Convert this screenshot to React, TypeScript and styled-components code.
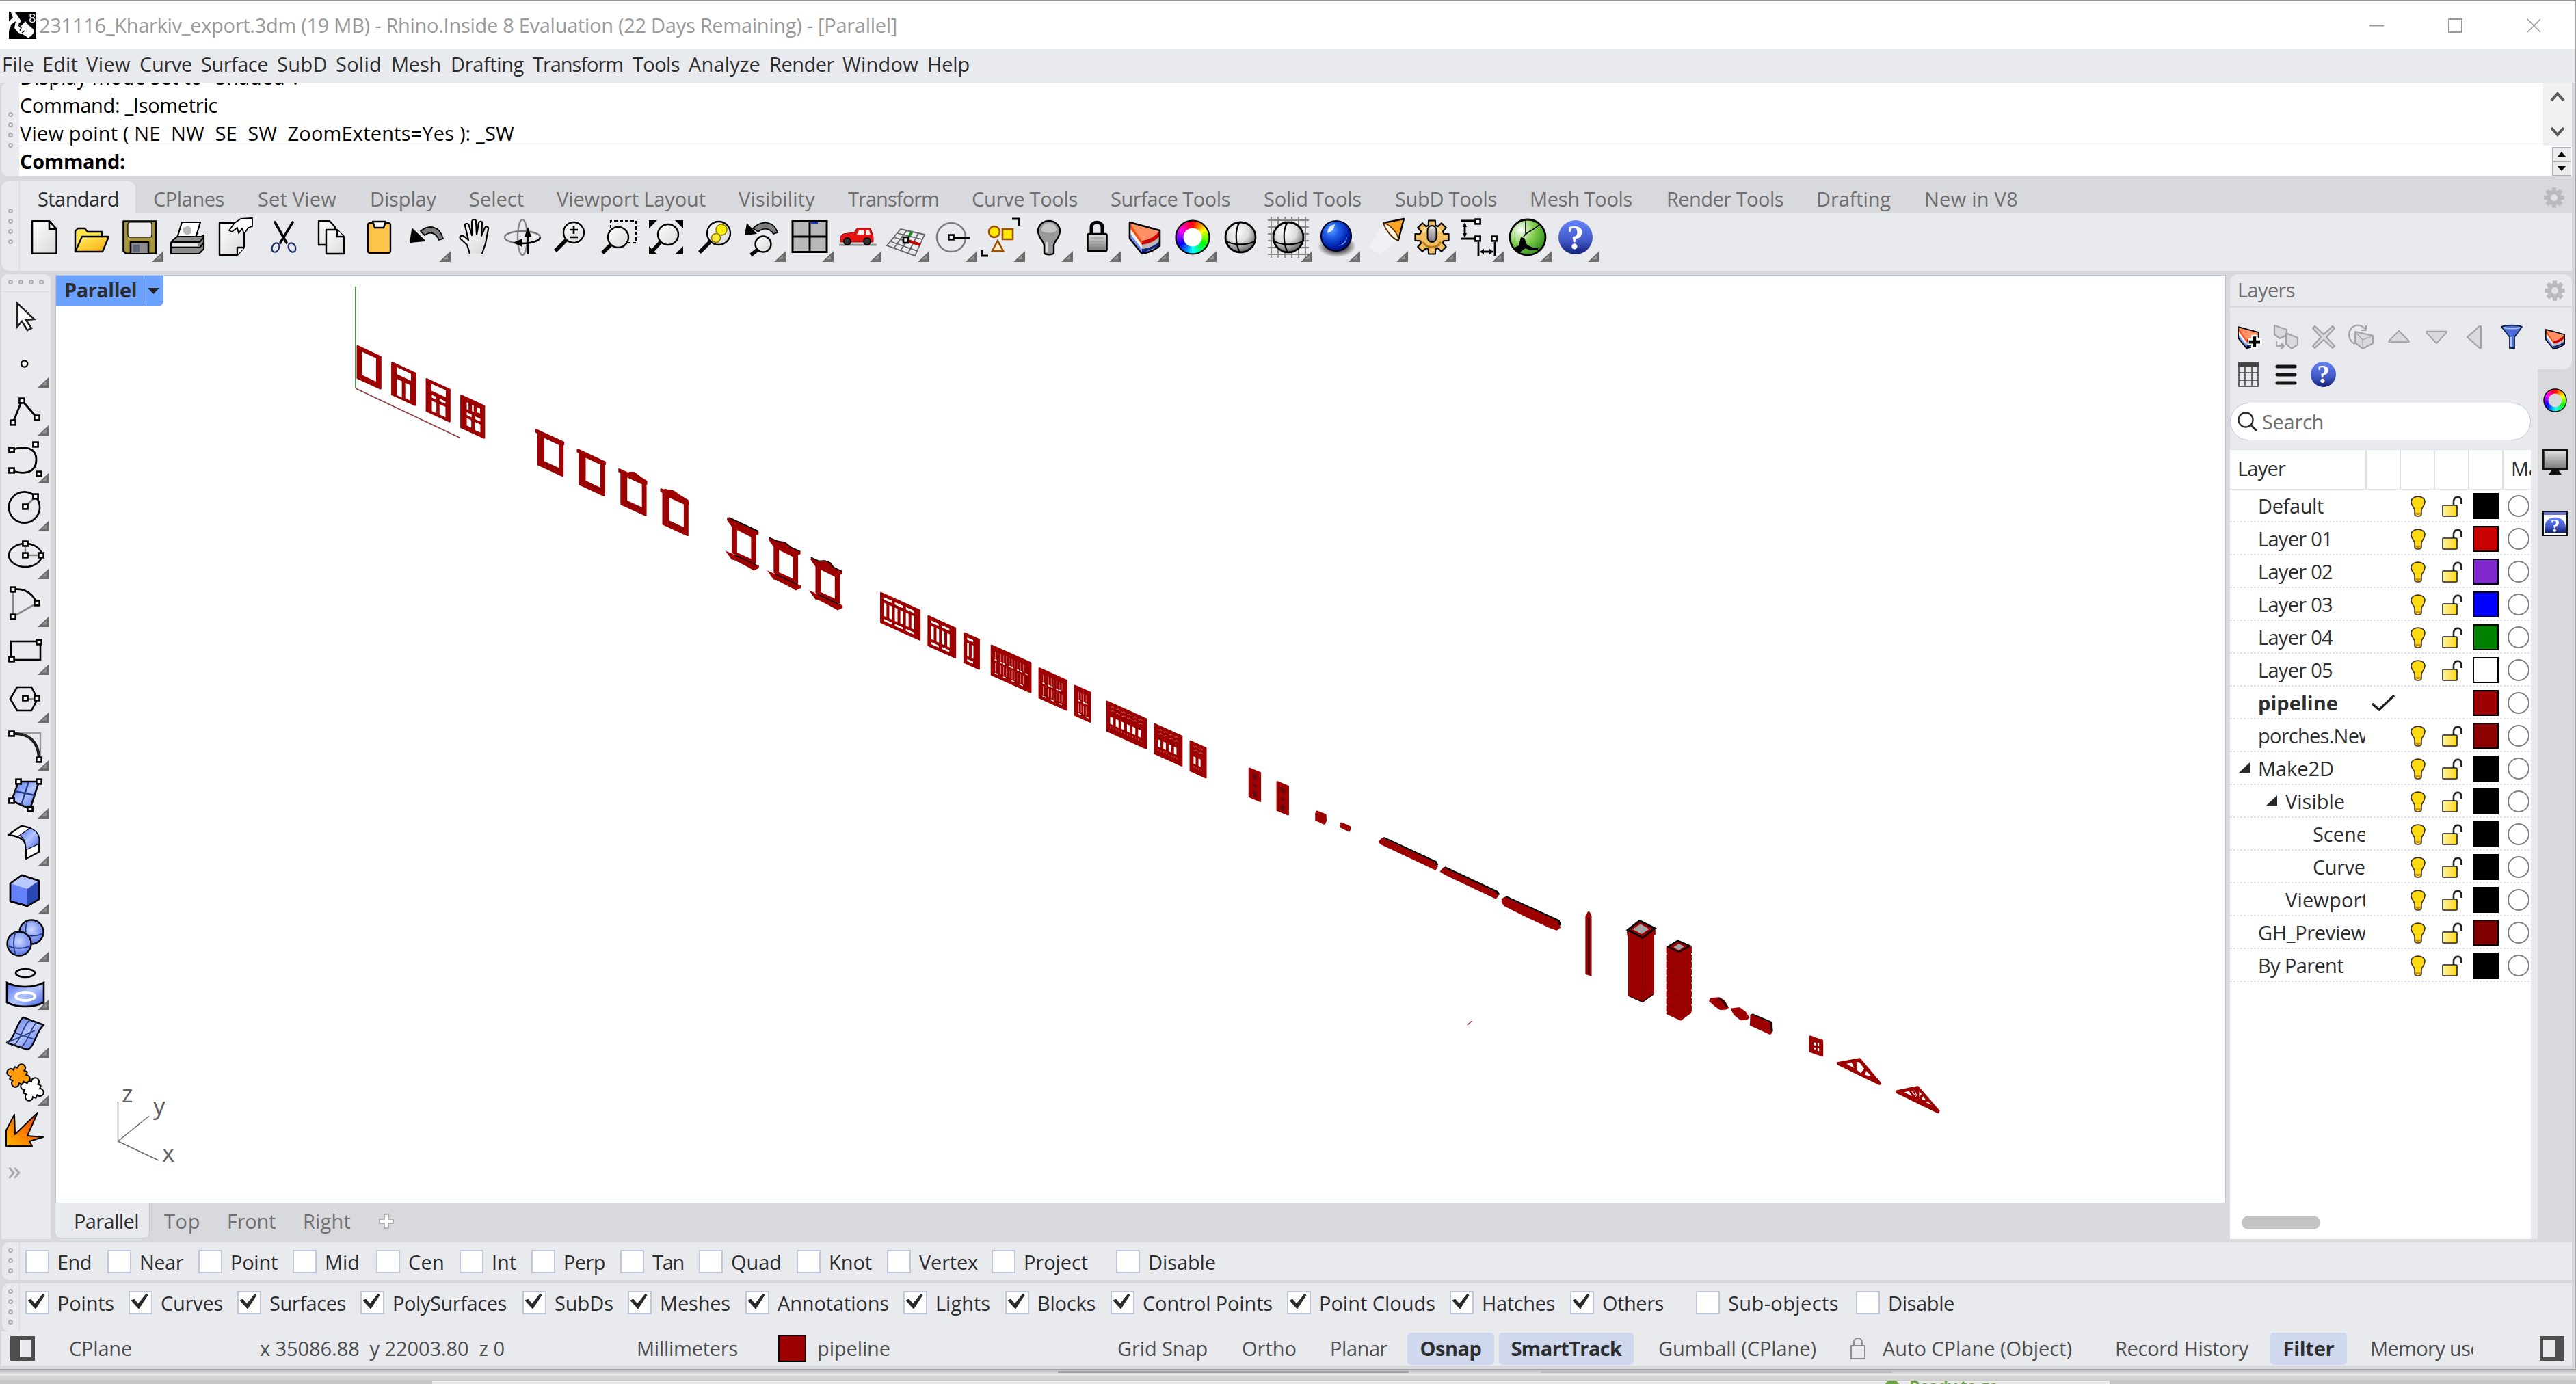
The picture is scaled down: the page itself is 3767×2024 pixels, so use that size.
import React, { useLayoutEffect, useRef, useState } from 'react';
import styled, { createGlobalStyle, css } from 'styled-components';

const C = {
  frame: '#d8d9dd',
  panel: '#e9eaee',
  edge: '#bfc7db',
  line: '#dfe3ea',
  text: '#2d2e2f',
  muted: '#6f6f70',
  status: '#4c4e4e',
  active: '#cfd8ed',
  red: '#9d0000',
};

const Global = createGlobalStyle`
  html, body { margin: 0; padding: 0; background: ${C.frame}; overflow: hidden; }
  body { font-family: "Open Sans", "Noto Sans", sans-serif; font-size: 29px; line-height: 36px; color: ${C.text}; }
  * { box-sizing: border-box; }
  svg { display: block; overflow: visible; flex: none; }
`;

/* ---------- text that tracks itself to a given width ---------- */
const TextSpan = styled.span`
  white-space: pre;
  flex: none;
`;
function Label({ children, w }: { children: string; w?: number }) {
  const ref = useRef<HTMLSpanElement>(null);
  const [ls, setLs] = useState(0);
  useLayoutEffect(() => {
    if (!ref.current || !w) return;
    const natural = ref.current.getBoundingClientRect().width;
    setLs((w - natural) / children.length);
  }, [children, w]);
  return (
    <TextSpan ref={ref} style={{ letterSpacing: ls }}>
      {children}
    </TextSpan>
  );
}

/* ---------- shared defs ---------- */
const Defs = () => (
  <svg width="0" height="0">
    <defs>
      <linearGradient id="paper" x1="0" y1="0" x2="1" y2="1">
        <stop offset="0" stopColor="#fff" />
        <stop offset="1" stopColor="#d8d8d8" />
      </linearGradient>
      <linearGradient id="gold" x1="0" y1="0" x2="1" y2="1">
        <stop offset="0" stopColor="#fff59a" />
        <stop offset="0.4" stopColor="#ffd43a" />
        <stop offset="1" stopColor="#f3a81c" />
      </linearGradient>
      <linearGradient id="lockg" x1="0" y1="0" x2="1" y2="0">
        <stop offset="0" stopColor="#fff2a0" />
        <stop offset="1" stopColor="#ffd91a" />
      </linearGradient>
      <linearGradient id="steel" x1="0" y1="0" x2="0" y2="1">
        <stop offset="0" stopColor="#e4e4e4" />
        <stop offset="1" stopColor="#777" />
      </linearGradient>
      <linearGradient id="help" x1="0" y1="0" x2="0" y2="1">
        <stop offset="0" stopColor="#6283f8" />
        <stop offset="0.6" stopColor="#4258c8" />
        <stop offset="1" stopColor="#101f75" />
      </linearGradient>
      <linearGradient id="blueSurf" x1="0" y1="0" x2="1" y2="1">
        <stop offset="0" stopColor="#4a69ea" />
        <stop offset="0.5" stopColor="#b5c6ff" />
        <stop offset="1" stopColor="#4261df" />
      </linearGradient>
      <linearGradient id="fire" x1="0" y1="1" x2="1" y2="0">
        <stop offset="0" stopColor="#ffb800" />
        <stop offset="1" stopColor="#f23000" />
      </linearGradient>
      <radialGradient id="ball" cx="0.4" cy="0.3" r="0.75">
        <stop offset="0" stopColor="#fff" />
        <stop offset="0.5" stopColor="#dcdcdc" />
        <stop offset="1" stopColor="#555" />
      </radialGradient>
      <radialGradient id="blueBall" cx="0.35" cy="0.3" r="0.8">
        <stop offset="0" stopColor="#5aa2ff" />
        <stop offset="0.3" stopColor="#1f5fe8" />
        <stop offset="0.7" stopColor="#001fae" />
        <stop offset="1" stopColor="#000a55" />
      </radialGradient>
      <radialGradient id="softBall" cx="0.5" cy="0.4" r="0.7">
        <stop offset="0" stopColor="#cbd7ff" />
        <stop offset="1" stopColor="#4766e6" />
      </radialGradient>
      <radialGradient id="greenBall" cx="0.3" cy="0.3" r="0.8">
        <stop offset="0" stopColor="#fff" />
        <stop offset="0.5" stopColor="#80cf4e" />
        <stop offset="1" stopColor="#2f8a17" />
      </radialGradient>
      <radialGradient id="shade">
        <stop offset="0.4" stopColor="#333" />
        <stop offset="1" stopColor="#333" stopOpacity="0" />
      </radialGradient>
    </defs>
  </svg>
);

/* ---------- icon parts ---------- */
const H = ({ x, y }: { x: number; y: number }) => (
  <rect x={x - 3.6} y={y - 3.4} width="7.2" height="6.8" fill="#fff" stroke="#000" strokeWidth="2.6" />
);
const Lens = ({ x, y, r, tx, ty }: { x: number; y: number; r: number; tx: number; ty: number }) => (
  <g>
    <line x1={x - r * 0.7} y1={y + r * 0.7} x2={tx} y2={ty} stroke="#000" strokeWidth="5.5" />
    <circle cx={x} cy={y} r={r} fill="url(#paper)" stroke="#000" strokeWidth="2.4" />
  </g>
);
const Wheel = ({ r = 21, w = 9 }: { r?: number; w?: number }) => (
  <g>
    {Array.from({ length: 36 }, (_, i) => {
      const a = ((i * 10 - 96) * Math.PI) / 180;
      const b = ((i * 10 - 84) * Math.PI) / 180;
      return (
        <path
          key={i}
          d={`M${25 + r * Math.cos(a)} ${25 + r * Math.sin(a)}A${r} ${r} 0 0 1 ${25 + r * Math.cos(b)} ${25 + r * Math.sin(b)}`}
          stroke={`hsl(${i * 10},100%,50%)`}
          strokeWidth={w}
          fill="none"
        />
      );
    })}
    <circle cx="25" cy="25" r={r + w / 2} fill="none" stroke="#000" strokeWidth="2.2" />
  </g>
);
const Help = () => (
  <g>
    <circle cx="25" cy="25" r="25" fill="url(#help)" />
    <text x="25" y="42" textAnchor="middle" fontFamily="Liberation Serif, serif" fontWeight="700" fontSize="50" fill="#fff">
      ?
    </text>
  </g>
);
const Wedge = () => (
  <g strokeLinejoin="round">
    <path d="M3 3V27L21 49L47 37V15Z" fill="#f2f2f2" />
    <path d="M3 19L21 42V49L3 27Z" fill="#6f90ff" />
    <path d="M21 42Q38 40 47 29V37L21 49Z" fill="#13297f" />
    <path d="M21 36Q38 34 47 23V30Q38 40 21 42Z" fill="#b9b9bb" />
    <path d="M21 30Q36 28 47 15V23Q38 34 21 36Z" fill="#cc0000" />
    <path d="M3 3L21 30V36L3 11Z" fill="#ff4e0c" />
    <path d="M3 3L47 15Q38 28 21 30Z" fill="#ff8f64" />
    <path d="M3 3V27L21 49Q38 46 47 37V15Z" fill="none" stroke="#000" strokeWidth="2.6" />
  </g>
);
const gearPath = (cx: number, cy: number, ro: number, ri: number, n: number) => {
  const pts: string[] = [];
  for (let i = 0; i < n; i++) {
    const base = (i / n) * Math.PI * 2 - Math.PI / 2;
    const s = Math.PI / n;
    [
      [-0.5, ro],
      [0.5, ro],
      [0.75, ri],
      [1.25, ri],
    ].forEach(([k, r]) => pts.push(`${cx + r * Math.cos(base + k * s)} ${cy + r * Math.sin(base + k * s)}`));
  }
  return `M${pts.join('L')}Z`;
};
const Gear = ({ size = 30 }: { size?: number }) => (
  <svg width={size} height={size} viewBox="0 0 30 30">
    <path d={gearPath(15, 15, 15, 11, 8)} fill="#b9babd" strokeLinejoin="round" />
    <circle cx="15" cy="15" r="5" fill="#e2e3e7" />
  </svg>
);
const Piece = ({ fill }: { fill: string }) => {
  const shapes = (
    <>
      <rect x="-9" y="-9" width="18" height="18" />
      <circle cx="-12" cy="0" r="4.6" />
      <circle cx="12" cy="0" r="4.6" />
      <circle cx="0" cy="-12" r="4.6" />
      <circle cx="0" cy="12" r="4.6" />
    </>
  );
  return (
    <g>
      <g stroke="#000" strokeWidth="4" strokeLinejoin="round">{shapes}</g>
      <g fill={fill}>{shapes}</g>
    </g>
  );
};

const ICONS: Record<string, React.ReactNode> = {
  new: (
    <g stroke="#000" strokeWidth="2.6" strokeLinejoin="round">
      <path d="M8 1.3H33L43.6 13V48.7H8Z" fill="url(#paper)" />
      <path d="M33 1.3V13H43.6Z" fill="#fff" />
    </g>
  ),
  open: (
    <g stroke="#000" strokeWidth="2.4" strokeLinejoin="round">
      <path d="M1 46V16L5 12H15L19 17H40V24" fill="#ffe54a" />
      <path d="M1 46L11 24H50L41 46Z" fill="url(#gold)" />
    </g>
  ),
  save: (
    <g stroke="#000" strokeWidth="2.6" strokeLinejoin="round">
      <path d="M1.5 1.5H49V48.7H5L1.5 45Z" fill="#a59440" />
      <rect x="8" y="3" width="35" height="22" rx="3" fill="#ececec" strokeWidth="1.2" />
      <path d="M12 48V32H38V48" fill="#8d8d92" />
      <rect x="16" y="36" width="9" height="11" fill="#5b6679" stroke="none" />
    </g>
  ),
  print: (
    <g stroke="#000" strokeWidth="2.2" strokeLinejoin="round">
      <path d="M10 26L17 3H44L37 26Z" fill="#fff" />
      <path d="M19 11L26 8L31 12V19L24 22L19 18Z" fill="#bbb" stroke="none" />
      <path d="M4 29L10 24H46L49 22V42L42 49H1V33Z" fill="#8c8c8c" />
      <path d="M2 32H43L49 25M2 40H43L49 33" fill="none" />
      <path d="M3 34H40V38H3Z" fill="#e5e5e5" stroke="none" />
    </g>
  ),
  props: (
    <g stroke="#000" strokeWidth="2.4" strokeLinejoin="round">
      <path d="M2 4H38V40L28 51H2Z" fill="url(#paper)" />
      <path d="M28 51V40H38" fill="#fff" />
      <path d="M16 15L24 4L33 -2L50 -3V9L44 11L38 20L35 12L30 19L28 11L20 17Z" fill="#fff" strokeWidth="1.8" />
    </g>
  ),
  cut: (
    <g fill="none" strokeLinecap="round">
      <path d="M13 3L30 33M39 3L21 33" stroke="#000" strokeWidth="3.6" />
      <ellipse cx="14" cy="40" rx="5" ry="7" transform="rotate(25 14 40)" stroke="#1a2a6a" strokeWidth="2.2" />
      <ellipse cx="38" cy="40" rx="5" ry="7" transform="rotate(-25 38 40)" stroke="#1a2a6a" strokeWidth="2.2" />
    </g>
  ),
  copy: (
    <g stroke="#000" strokeWidth="2.4" strokeLinejoin="round" fill="url(#paper)">
      <path d="M7 1.3H23L31 10V36H7Z" />
      <path d="M18 14H34L44 24V49H18Z" />
      <path d="M34 14V24H44" fill="#fff" />
    </g>
  ),
  paste: (
    <g stroke="#000" strokeWidth="2.4" strokeLinejoin="round">
      <rect x="9" y="4" width="33" height="44" rx="3" fill="#ffc54a" />
      <path d="M16 2H35L32 11H19Z" fill="#fff" />
    </g>
  ),
  undo: (
    <g stroke="#000" strokeWidth="1.8" strokeLinejoin="round">
      <path d="M16 16C28 6 44 8 49 27L43 29C38 18 30 16 22 22Z" fill="#7d7d7d" />
      <path d="M1 32L4 13L22 30Z" fill="#000" />
    </g>
  ),
  hand: (
    <path
      d="M18 49L14 36L4 27C2 23 7 21 10 24L16 29L11 8C11 4 16 4 17 8L21 22L21 2C22 -2 27 -2 27 2L28 21L31 4C32 1 37 1 36 5L35 23L40 11C42 8 46 10 45 13L41 34L36 49"
      fill="url(#paper)"
      stroke="#000"
      strokeWidth="2.2"
      strokeLinejoin="round"
    />
  ),
  rotate: (
    <g fill="none" strokeWidth="2.4">
      <ellipse cx="25" cy="25" rx="7" ry="26" stroke="#888" />
      <ellipse cx="25" cy="25" rx="26" ry="9" stroke="#777" />
      <path d="M25 34C35 34 50 31 51 25M33 50V12" stroke="#000" />
      <path d="M11 33L25 27V39Z M33 10L28 24H38Z" fill="#000" />
    </g>
  ),
  zoom: (
    <g>
      <Lens x={30} y={18} r={15} tx={3} ty={45} />
      <path d="M30 8V20M24 14H36M24 25H36" stroke="#000" strokeWidth="2.6" />
    </g>
  ),
  zoomWin: (
    <g>
      <path d="M14 12V1H51V33H40" fill="none" stroke="#000" strokeWidth="2.2" strokeDasharray="5 3" />
      <Lens x={25} y={25} r={15} tx={2} ty={48} />
    </g>
  ),
  zoomExt: (
    <g>
      <path d="M0 0H12L0 12ZM50 0H38L50 12ZM0 50V38L12 50ZM50 50V38L38 50Z" fill="#000" />
      <Lens x={28} y={21} r={15} tx={5} ty={45} />
    </g>
  ),
  zoomSel: (
    <g>
      <Lens x={32} y={19} r={17} tx={4} ty={47} />
      <circle cx="36" cy="14" r="8" fill="#ffef00" stroke="#8a7a00" strokeWidth="1.5" />
      <circle cx="28" cy="26" r="6.5" fill="#ffe93a" stroke="#8a7a00" strokeWidth="1.5" />
    </g>
  ),
  zoomPrev: (
    <g>
      <Lens x={27} y={35} r={11.5} tx={9} ty={51} />
      <path d="M12 12C24 0 42 0 48 18L42 20C37 12 28 10 20 17Z" fill="#7d7d7d" stroke="#000" strokeWidth="1.6" />
      <path d="M0 22L3 4L18 20Z" fill="#000" />
    </g>
  ),
  views: (
    <g stroke="#000" strokeWidth="3">
      <rect x="0" y="1.5" width="50" height="45" fill="#b9b9b9" />
      <path d="M25 1.5V46.5M0 24H50" />
      <path d="M27 4H37" stroke="#1c2f9e" strokeWidth="4" />
    </g>
  ),
  car: (
    <g>
      <path d="M-2 36H53" stroke="#9b9b9b" strokeWidth="3" />
      <path d="M0 32V24L4 20L20 18L24 12H44L48 24V32Z" fill="#e71414" stroke="#a00" />
      <path d="M27 15H34V21H24ZM37 15H42L44 21H37Z" fill="#fff" />
      <circle cx="10" cy="31" r="5" fill="#333" stroke="#000" strokeWidth="2" />
      <circle cx="39" cy="31" r="5" fill="#333" stroke="#000" strokeWidth="2" />
    </g>
  ),
  cplane: (
    <g fill="none" strokeWidth="1.8" stroke="#666">
      <path d="M18 13L53 21L39 52L-2 37Z M27 15L8 41M36 17L18 44M44 19L29 48M13 19L49 28M8 25L46 37M3 31L42 45" />
      <path d="M27 29L34 17" stroke="#0a9a0a" strokeWidth="3.4" />
      <path d="M29 30L47 36" stroke="#c80000" strokeWidth="4" />
      <rect x="22" y="25" width="7" height="8" fill="#fff" stroke="#000" strokeWidth="2.6" />
    </g>
  ),
  circleSnap: (
    <g fill="none">
      <circle cx="22" cy="25" r="21" stroke="#7d7d7d" strokeWidth="2.6" />
      <path d="M26 26H50" stroke="#000" strokeWidth="3" />
      <H x={22} y={25} />
    </g>
  ),
  select: (
    <g strokeWidth="2.6" stroke="#9c5200" fill="#ffe800">
      <circle cx="15" cy="17" r="8" />
      <rect x="27" y="13" width="15" height="15" />
      <path d="M20 30L28 45H12Z" fill="#ffe9c6" />
      <path d="M41 -2H51V8M-3 44V52H6" stroke="#000" strokeWidth="3" fill="none" />
    </g>
  ),
  bulb: (
    <g>
      <path d="M18 48V37C18 31 9 26 9 16A16 15 0 0 1 41 16C41 26 32 31 32 37V48C30 51 20 51 18 48Z" fill="#9a9a9a" stroke="#000" strokeWidth="2.4" />
      <path d="M14 14A11 10 0 0 1 36 14C36 20 14 20 14 14Z" fill="#c6c6c6" />
      <path d="M22 32V46" stroke="#ddd" strokeWidth="3" />
    </g>
  ),
  lock: (
    <g>
      <path d="M17 22V10C17 1 33 1 33 10V22" fill="none" stroke="#000" strokeWidth="5" />
      <rect x="11.5" y="20" width="28" height="25" rx="2" fill="url(#steel)" stroke="#000" strokeWidth="2.6" />
      <path d="M16 26H35M16 31H35M16 36H35M16 41H35" stroke="#888" />
    </g>
  ),
  layer: <Wedge />,
  wheel: (
    <g>
      <circle cx="25" cy="25" r="16" fill="#fff" />
      <Wheel r={19} w={11} />
    </g>
  ),
  sphere: (
    <g fill="none" stroke="#000" strokeWidth="2.2">
      <circle cx="25" cy="25" r="22" fill="url(#ball)" strokeWidth="2.8" />
      <path d="M24 3C16 14 18 36 24 47M3 30C12 37 38 37 47 30" />
    </g>
  ),
  sphereGrid: (
    <g fill="none" stroke="#888" strokeWidth="1.8">
      <path d="M0 -5V55M10 -5V55M20 -5V55M30 -5V55M40 -5V55M50 -5V55M-5 0H55M-5 10H55M-5 20H55M-5 30H55M-5 40H55M-5 50H55" />
      <g stroke="#000">
        <circle cx="25" cy="25" r="22" fill="url(#ball)" strokeWidth="2.8" />
        <path d="M24 3C16 14 18 36 24 47M3 30C12 37 38 37 47 30" strokeWidth="2.2" />
      </g>
    </g>
  ),
  blueBall: (
    <g>
      <ellipse cx="26" cy="38" rx="28" ry="16" fill="url(#shade)" />
      <circle cx="25" cy="23" r="22" fill="url(#blueBall)" stroke="#000020" strokeWidth="2.2" />
      <path d="M12 19Q12 8 23 6Q22 16 12 19Z" fill="#fff" opacity="0.85" />
      <path d="M28 38Q38 34 41 24Q40 36 28 38Z" fill="#9fd0ff" opacity="0.8" />
    </g>
  ),
  spot: (
    <g>
      <path d="M24 6L45 28L20 50L2 40Z" fill="#fff" opacity="0.35" />
      <path d="M24 4L54 -2L46 29C38 28 28 14 24 4Z" fill="#f9a423" stroke="#000" strokeWidth="2.4" strokeLinejoin="round" />
      <path d="M24 4C34 6 46 20 46 29C38 28 27 14 24 4Z" fill="#fff0dc" stroke="#5a3300" strokeWidth="1.6" />
    </g>
  ),
  gear: (
    <g>
      <path d={gearPath(25, 25, 25, 18, 8)} fill="#f0bf60" stroke="#000" strokeWidth="2.2" strokeLinejoin="round" />
      <path d="M12 32A15 15 0 0 0 38 32" stroke="#b9791a" strokeWidth="3" fill="none" />
      <path d="M12 18A15 15 0 0 1 38 18" stroke="#ffe2a0" strokeWidth="4" fill="none" />
      <rect x="18.5" y="8" width="13" height="24" rx="6.5" fill="url(#steel)" stroke="#000" strokeWidth="2" />
    </g>
  ),
  dims: (
    <g stroke="#000" strokeWidth="2.8" fill="none">
      <path d="M-3 1H20M-3 27H20M23 32V52M47 32V52M3 6V23M29 46H41" />
      <path d="M3 3L0 10H6ZM3 26L0 19H6ZM25 46L31 42V50ZM45 46L39 42V50Z" fill="#000" stroke="none" />
      <H x={22} y={2} />
      <H x={22} y={27} />
      <H x={46} y={27} />
    </g>
  ),
  gh: (
    <g>
      <circle cx="25" cy="25" r="26" fill="url(#greenBall)" stroke="#000" strokeWidth="2.8" />
      <path d="M4 41L12 37L15 25L20 26L24 36L32 40H40V44L28 44L22 41L12 48Z" fill="#000" />
      <path d="M19 24C24 16 36 14 42 6M22 0V22" stroke="#000" strokeWidth="1.6" fill="none" />
    </g>
  ),
  help: <Help />,

  /* sidebar */
  cursor: <path d="M14 6V41L21 33L29 46L35 43L27 31L39 30Z" fill="#fff" stroke="#222" strokeWidth="2.6" />,
  point: <circle cx="24.7" cy="25" r="4.6" fill="#fff" stroke="#000" strokeWidth="2.4" />,
  polyline: (
    <g>
      <path d="M8 41L21 8.5L43 34" fill="none" stroke="#000" strokeWidth="2.8" />
      <H x={8} y={41} />
      <H x={21} y={9} />
      <H x={43} y={34} />
    </g>
  ),
  curve: (
    <g>
      <path d="M6 11C26 4 42 8 42 25C42 44 26 48 6 41" fill="none" stroke="#000" strokeWidth="2.8" />
      <H x={6} y={11} />
      <H x={6} y={41} />
      <H x={41} y={3} />
      <H x={46} y={46} />
    </g>
  ),
  circle: (
    <g>
      <circle cx="24.5" cy="25" r="22.6" fill="none" stroke="#000" strokeWidth="2.6" />
      <path d="M26 24L41 9" stroke="#888" strokeWidth="2.6" />
      <H x={26} y={24} />
      <H x={41} y={9} />
    </g>
  ),
  ellipse: (
    <g>
      <ellipse cx="26" cy="25" rx="24" ry="17" fill="none" stroke="#000" strokeWidth="2.6" />
      <path d="M26 8V25H49" stroke="#888" strokeWidth="2.4" fill="none" />
      <H x={26} y={25} />
      <H x={26} y={8} />
      <H x={49} y={25} />
    </g>
  ),
  arc: (
    <g>
      <path d="M8 5V45L43 25" fill="none" stroke="#888" strokeWidth="2.6" />
      <path d="M8 5C24 3 36 10 43 25" fill="none" stroke="#000" strokeWidth="2.8" />
      <H x={8} y={5} />
      <H x={43} y={25} />
      <H x={8} y={45} />
    </g>
  ),
  rect: (
    <g>
      <rect x="5" y="11" width="43" height="27" fill="none" stroke="#000" strokeWidth="2.6" />
      <H x={6} y={37} />
      <H x={46} y={12} />
    </g>
  ),
  polygon: (
    <g>
      <path d="M4 25L14 8H35L44 25L35 42H14Z" fill="none" stroke="#000" strokeWidth="2.6" />
      <path d="M26 25H43" stroke="#888" strokeWidth="2" />
      <H x={26} y={24} />
      <H x={43} y={24} />
    </g>
  ),
  fillet: (
    <g>
      <path d="M20 5H48V40" fill="none" stroke="#999" strokeWidth="2.4" />
      <path d="M6 6C30 5 45 16 46 42" fill="none" stroke="#222" strokeWidth="4.2" />
      <H x={6} y={6} />
      <H x={46} y={44} />
    </g>
  ),
  patch: (
    <g>
      <path d="M16 6H46L33 46L6 34Z" fill="url(#blueSurf)" stroke="#000" strokeWidth="2.6" />
      <path d="M31 6L20 40M11 20L40 26" stroke="#223a80" strokeWidth="2.4" />
      <H x={16} y={6} />
      <H x={46} y={6} />
      <H x={33} y={46} />
      <H x={6} y={34} />
    </g>
  ),
  bend: (
    <g stroke="#000" strokeWidth="2.4" strokeLinejoin="round">
      <path d="M1 14L20 1C34 2 45 10 46 19V39L27 49V36C27 24 22 16 1 14Z" fill="#fff" />
      <path d="M17 15L33 4C42 8 45 12 46 19V27L27 36C27 26 25 18 17 15Z" fill="url(#blueSurf)" strokeWidth="1.2" />
    </g>
  ),
  box: (
    <g stroke="#000" strokeWidth="2.4" strokeLinejoin="round">
      <path d="M4 15L21 3L46 11V38L29 48L4 41Z" fill="#6582fb" />
      <path d="M4 15L21 3L46 11L29 23Z" fill="#b8c9ff" stroke="none" />
      <path d="M29 23L46 11V38L29 48Z" fill="#2c46b4" stroke="none" />
      <path d="M4 15L21 3L46 11V38L29 48L4 41Z" fill="none" />
    </g>
  ),
  solids: (
    <g stroke="#000" strokeWidth="2.4">
      <circle cx="35" cy="16" r="17.5" fill="url(#softBall)" />
      <path d="M29 0C25 10 26 22 30 33M18 18C28 23 42 23 52 18" fill="none" stroke="#243a80" strokeWidth="1.8" />
      <circle cx="17" cy="33" r="17.5" fill="url(#softBall)" />
      <path d="M12 16C8 26 8 38 12 50M0 36C10 41 24 41 34 36" fill="none" stroke="#243a80" strokeWidth="1.8" />
    </g>
  ),
  project: (
    <g fill="none" stroke="#000" strokeWidth="2.6">
      <ellipse cx="26" cy="6" rx="14" ry="6" />
      <path d="M-1 20C14 28 38 28 53 20V49C38 57 14 57 -1 49Z" fill="url(#blueSurf)" />
      <ellipse cx="26" cy="40" rx="14" ry="6" stroke="#fff" strokeWidth="4" />
    </g>
  ),
  mesh: (
    <g stroke="#000" strokeWidth="2.4" strokeLinejoin="round">
      <path d="M-1 38C10 34 14 6 23 1L53 12C42 20 40 44 29 48Z" fill="url(#blueSurf)" />
      <path d="M8 42C20 36 24 8 33 5M18 45C30 40 34 14 43 8M10 23L40 33M-1 38L40 20" stroke="#2c3f80" strokeWidth="1.8" fill="none" />
    </g>
  ),
  puzzle: (
    <g>
      <g transform="translate(36 36) rotate(22)"><Piece fill="#fff" /></g>
      <g transform="translate(16 16) rotate(22)"><Piece fill="#ff9d0c" /></g>
    </g>
  ),
  explode: (
    <path d="M-2 49V26L10 3L11 32L44 0L29 34L52 36L32 42L36 49Z" fill="url(#fire)" stroke="#000" strokeWidth="2" strokeLinejoin="round" />
  ),
};

const Icon = ({ name, size = 50 }: { name: string; size?: number }) => (
  <svg width={size} height={size} viewBox="0 0 50 50">
    {ICONS[name]}
  </svg>
);

/* ---------- window chrome ---------- */
const Window = styled.div`
  width: 3767px;
  height: 2024px;
  display: flex;
  flex-direction: column;
  background: ${C.frame};
  overflow: hidden;
`;
const Frame = styled.div`
  height: 2002px;
  flex: none;
  display: flex;
  flex-direction: column;
  border-right: 1px solid #a3a4a6;
`;
const TitleBar = styled.header`
  height: 72px;
  flex: none;
  border-top: 2px solid #9a9a9a;
  background: #fff;
  display: flex;
  align-items: center;
  padding-left: 13px;
  color: #999;
`;
const TitleText = styled.div`
  margin-left: 4px;
  flex: 1;
`;
const WindowButtons = styled.div`
  display: flex;
  gap: 94px;
  padding-right: 50px;
`;
const MenuBar = styled.nav`
  height: 49px;
  flex: none;
  background: ${C.panel};
  display: flex;
  padding: 4px 0 0 3px;
`;
const Cell = styled.div<{ $w: number }>`
  width: ${(p) => p.$w}px;
  flex: none;
`;

const MENU: [string, number, number][] = [
  ['File', 5, 49], ['Edit', 64, 113], ['View', 128, 190], ['Curve', 206, 280], ['Surface', 296, 391], ['SubD', 407, 478],
  ['Solid', 493, 557], ['Mesh', 574, 644], ['Drafting', 661, 765], ['Transform', 781, 910], ['Tools', 927, 993],
  ['Analyze', 1009, 1111], ['Render', 1127, 1219], ['Window', 1234, 1342], ['Help', 1358, 1417],
];
const TABS: [string, number, number][] = [
  ['Standard', 57, 173], ['CPlanes', 226, 327], ['Set View', 379, 491], ['Display', 543, 637], ['Select', 688, 765],
  ['Viewport Layout', 816, 1031], ['Visibility', 1082, 1191], ['Transform', 1242, 1372], ['Curve Tools', 1423, 1575],
  ['Surface Tools', 1626, 1798], ['Solid Tools', 1850, 1990], ['SubD Tools', 2042, 2188], ['Mesh Tools', 2239, 2386],
  ['Render Tools', 2439, 2607], ['Drafting', 2658, 2764], ['New in V8', 2816, 2950],
];
const cellWidth = (items: [string, number, number][], i: number) => (i + 1 < items.length ? items[i + 1][1] : items[i][2] + 30) - items[i][1];

/* ---------- grips ---------- */
const GripBox = styled.div<{ $row?: boolean; $r?: string }>`
  flex: none;
  display: flex;
  flex-direction: ${(p) => (p.$row ? 'row' : 'column')};
  align-items: center;
  justify-content: center;
  gap: 8px;
  background: ${C.panel};
  border-radius: ${(p) => p.$r || '10px 0 0 10px'};
  ${(p) =>
    p.$row
      ? css`height: 23px; justify-content: flex-start; padding-left: 10px;`
      : css`width: 26px; margin-left: 2px;`}
`;
const Dot = styled.i`
  width: 7px;
  height: 7px;
  border-radius: 50%;
  border: 2.5px solid #acadb1;
`;
const Grip = ({ n, row, r }: { n: number; row?: boolean; r?: string }) => (
  <GripBox $row={row} $r={r}>
    {Array.from({ length: n }, (_, i) => (
      <Dot key={i} />
    ))}
  </GripBox>
);

/* ---------- command area ---------- */
const CommandArea = styled.section`
  height: 137px;
  flex: none;
  display: flex;
  padding-right: 5px;
  color: #000;
`;
const CommandBody = styled.div`
  flex: 1;
  display: flex;
  flex-direction: column;
  background: #fff;
`;
const History = styled.div`
  height: 92px;
  display: flex;
`;
const HistoryLines = styled.div`
  flex: 1;
  height: 92px;
  overflow: hidden;
  display: flex;
  flex-direction: column;
  justify-content: flex-end;
  padding-left: 1px;
`;
const HistoryLine = styled.div`
  height: 41px;
  line-height: 45px;
  flex: none;
`;
const HistoryScroll = styled.div`
  width: 42px;
  background: #f0f0f0;
  display: flex;
  flex-direction: column;
  align-items: center;
  justify-content: space-between;
  padding: 12px 0;
`;
const Prompt = styled.div`
  flex: 1;
  border-top: 1px solid ${C.edge};
  display: flex;
  justify-content: space-between;
  align-items: center;
  padding: 0 1px;
  font-weight: 700;
`;
const Spinner = styled.div`
  width: 28px;
  height: 42px;
  display: flex;
  flex-direction: column;
`;
const SpinButton = styled.div`
  flex: 1;
  border: 1.5px solid #aeb0b4;
  background: #ececee;
  display: flex;
  align-items: center;
  justify-content: center;
`;

/* ---------- toolbar ---------- */
const TabStrip = styled.div`
  height: 54px;
  flex: none;
  display: flex;
  padding-top: 6px;
`;
const ToolTab = styled.div<{ $w: number; $active?: boolean }>`
  width: ${(p) => p.$w}px;
  flex: none;
  padding-top: 9px;
  color: ${(p) => (p.$active ? C.text : C.muted)};
`;
const ActiveTab = styled.div`
  width: 170px;
  margin-right: 26px;
  padding: 9px 0 0 26px;
  background: ${C.panel};
  border-left: 1px solid ${C.frame};
  border-radius: 0 12px 0 0;
  flex: none;
`;
const GearSlot = styled.div`
  margin: 10px 16px 0 auto;
`;
const ToolBarRow = styled.div`
  display: flex;
  height: 84px;
  flex: none;
  padding-right: 5px;
`;
const GripBack = styled.div<{ $top?: boolean }>`
  width: 26px;
  margin-left: 2px;
  flex: none;
  background: ${C.panel};
  border-radius: ${(p) => (p.$top ? '12px 0 0 0' : '0 0 0 12px')};
  display: flex;
  flex-direction: column;
  align-items: center;
  justify-content: ${(p) => (p.$top ? 'flex-end' : 'flex-start')};
  gap: 8px;
`;
const ToolBar = styled.div`
  flex: 1;
  background: ${C.panel};
  border-left: 1px solid ${C.frame};
  display: flex;
`;
const ToolButton = styled.div`
  width: 70px;
  height: 71px;
  flex: none;
  position: relative;
  display: flex;
  justify-content: center;
  align-items: flex-start;
  padding-top: 10px;
`;
const FlySvg = styled.svg`
  position: absolute;
  right: 0;
  bottom: 0;
`;
const Fly = () => (
  <FlySvg width="17" height="16" viewBox="0 0 17 16">
    <path d="M17 0V16H0Z" fill="#6a6a6a" />
    <path d="M13 6V12.5H6Z" fill="#909090" />
  </FlySvg>
);
const TOOLS = [
  'new', 'open', 'save*', 'print', 'props', 'cut', 'copy', 'paste', 'undo*', 'hand', 'rotate', 'zoom', 'zoomWin', 'zoomExt',
  'zoomSel', 'zoomPrev*', 'views*', 'car*', 'cplane*', 'circleSnap*', 'select*', 'bulb*', 'lock*', 'layer*', 'wheel*', 'sphere',
  'sphereGrid*', 'blueBall*', 'spot*', 'gear*', 'dims*', 'gh*', 'help*',
];

/* ---------- workspace ---------- */
const Workspace = styled.main`
  height: 1411px;
  margin-top: 5px;
  flex: none;
  display: flex;
  padding-left: 2px;
`;
const SideBar = styled.aside`
  width: 72px;
  background: ${C.panel};
  border-radius: 10px 10px 0 0;
  display: flex;
  flex-direction: column;
  flex: none;
`;
const SideHead = styled.div`
  border-bottom: 1px solid ${C.frame};
  height: 26px;
  flex: none;
`;
const SideButton = styled.div`
  height: 70px;
  flex: none;
  position: relative;
  display: flex;
  justify-content: center;
  align-items: center;
  width: 70px;
  padding-right: 2px;
`;
const More = styled.div`
  color: #a5a6aa;
  font-size: 40px;
  padding: 6px 0 0 9px;
`;
const SIDE = [
  'cursor', 'point', 'polyline', 'curve', 'circle', 'ellipse', 'arc', 'rect', 'polygon', 'fillet', 'patch', 'bend', 'box',
  'solids', 'project', 'mesh', 'puzzle', 'explode',
];
const Center = styled.div`
  width: 3175px;
  margin-left: 6px;
  flex: none;
  display: flex;
  flex-direction: column;
`;
const Viewport = styled.div`
  height: 1358px;
  margin: 1px 0 0 1px;
  border: 1px solid ${C.edge};
  background: #fff;
  position: relative;
  overflow: hidden;
`;
const ViewLabel = styled.div`
  position: absolute;
  left: 0;
  top: 0;
  width: 157px;
  height: 45px;
  background: #6ca2ff;
  border-radius: 0 0 8px 0;
  display: flex;
  align-items: center;
  padding: 0 0 3px 12px;
  font-weight: 700;
  color: #2c2d30;
`;
const ViewMenu = styled.div`
  margin: 3px 0 0 auto;
  height: 42px;
  width: 29px;
  border-left: 1px solid #35507f;
  display: flex;
  align-items: center;
  padding-left: 5px;
`;
const ViewTabs = styled.div`
  height: 52px;
  display: flex;
  color: ${C.muted};
`;
const ViewTabActive = styled.div`
  width: 139px;
  height: 51px;
  background: ${C.panel};
  border: 1px solid ${C.edge};
  border-top: 0;
  border-radius: 0 0 7px 7px;
  padding: 8px 0 0 27px;
  color: ${C.text};
  flex: none;
`;
const ViewTab = styled.div<{ $w: number }>`
  width: ${(p) => p.$w}px;
  padding-top: 8px;
  flex: none;
`;

/* ---------- 3D scene ---------- */
const para = (x: number, y: number, w: number, h: number, s = 0.71) => `M${x} ${y}l${w} ${w * s}v${h}l${-w} ${-w * s}z`;
const Red = ({ d }: { d: string }) => <path d={d} fill={C.red} stroke={C.red} strokeWidth="5" strokeLinejoin="round" />;
const Hole = ({ d }: { d: string }) => <path d={d} fill="#fff" />;

const Grille = ({ x, y, n, w, kind }: { x: number; y: number; n: number; w: number; kind: number }) => {
  const S = 0.69;
  const cells = Array.from({ length: n }, (_, i) => i);
  const inner = w - 20;
  const step = inner / n;
  const at = (dx: number, dy: number, ww: number, h: number) => para(x + dx, y + dx * S + dy, ww, h, S);
  return (
    <g>
      <Red d={para(x + 2, y + 4, w - 4, 131, S)} />
      {kind === 0 && (
        <>
          {cells.map((i) => (
            <Hole key={i} d={at(10 + i * step, 41, step - 8, 58)} />
          ))}
          {cells.filter((i) => i % 2 === 0).map((i) => (
            <g key={i}>
              <Hole d={at(10 + i * step, 17, step * 2 - 9, 10)} />
              <Hole d={at(10 + i * step, 112, step * 2 - 9, 9)} />
            </g>
          ))}
        </>
      )}
      {kind === 1 &&
        Array.from({ length: n * 2 }, (_, i) => (
          <g key={i}>
            <path d={at(12 + (i * inner) / (n * 2), 24, 1.6, 32)} fill="#c98686" />
            <path d={at(12 + (i * inner) / (n * 2), 74, 1.6, 38)} fill="#d9a3a3" />
            {i % 3 !== 1 && <Hole d={at(11 + (i * inner) / (n * 2), 58, 6, 6)} />}
            {i % 3 === 0 && <Hole d={at(11 + (i * inner) / (n * 2), 117, 9, 4)} />}
          </g>
        ))}
      {kind === 2 &&
        cells.map((i) => (
          <g key={i}>
            <Hole d={at(11 + i * step, 64, step - 8, 32)} />
            <path
              d={`M${x + 11 + i * step} ${y + 20 + (11 + i * step) * S}l4 5l3 -6l4 9M${x + 11 + i * step} ${y + 38 + (11 + i * step) * S}l5 4l2 -6l5 8M${x + 12 + i * step} ${y + 106 + (11 + i * step) * S}v8m6 -2l3 8`}
              stroke="#d99"
              strokeWidth="1.6"
              fill="none"
            />
          </g>
        ))}
    </g>
  );
};

const Scene = () => (
  <svg width="3172" height="1356" viewBox="82 403 3172 1356">
    <path d="M520 419V568" stroke="#3c8f3c" strokeWidth="1.8" />
    <path d="M520 568L672 640" stroke="#8f3c3c" strokeWidth="1.8" />
    <g transform="translate(480 400) scale(0.5102 0.33163)">
      {[0, 1, 2, 3].map((i) => (
        <Red key={i} d={para(84 + i * 99, 319 + i * 72.5, 66, 143)} />
      ))}
      {[
        [97, 345, 40, 103],
        [197, 413, 40, 31], [197, 465, 14, 72], [221, 482, 14, 68],
        [296, 486, 41, 31], [297, 535, 11, 12], [319, 552, 17, 10], [297, 561, 13, 46], [319, 576, 17, 46],
        [397, 568, 5, 30], [412, 579, 5, 28], [427, 590, 8, 22], [397, 612, 14, 12], [421, 630, 15, 12], [397, 638, 13, 32], [420, 654, 16, 36],
      ].map((h, i) => (
        <Hole key={i} d={para(h[0], h[1], h[2], h[3])} />
      ))}
      {[[602, 700], [721, 787], [840, 874], [960, 962]].map(([x, y], i) => (
        <g key={i}>
          <Red d={para(x, y, 70, 144)} />
          <Red d={para(x - 6, y - 12, 78, 12)} />
          <Hole d={para(x + 17, y + 26, 42, 101)} />
          <path d={`M${x + 14} ${y + 134}l46 33`} stroke="#4a0c0c" strokeWidth="2" />
        </g>
      ))}
      <Red d="M852 884L866 877H876L896 900L910 914Z" />
      <Red d="M965 952L990 960L1004 976L1030 1000L1010 1000Z" />
      {[0, 1, 2].map((i) => (
        <g key={i} transform={`translate(${i * 120} ${i * 87.5})`}>
          <Red d={para(1159, 1110, 65, 122)} />
          <Hole d={para(1172, 1129, 40, 101)} />
          <path d="M1146 1079L1231 1138V1148L1213 1160L1160 1119L1145 1086Z" fill={C.red} stroke={C.red} strokeWidth="5" />
          {i === 0 && <path d="M1148 1076L1232 1136" stroke="#000" strokeWidth="5" />}
          {i === 1 && (
            <>
              <Red d="M1165 1092L1188 1098L1206 1120Z" />
              <path d="M1144 1077L1172 1096L1188 1098L1204 1118L1232 1138" stroke="#000" strokeWidth="4" fill="none" />
            </>
          )}
          {i === 2 && (
            <>
              <Red d="M1168 1096L1180 1092L1196 1100L1210 1124Z" />
              <path d="M1144 1077L1164 1093L1184 1091L1198 1100L1208 1120L1232 1138" stroke="#000" strokeWidth="4" fill="none" />
            </>
          )}
          <path d="M1144 1229L1232 1290V1298L1220 1307L1206 1294L1166 1262L1158 1260Z" fill={C.red} stroke={C.red} strokeWidth="5" />
          <path d="M1164 1240L1226 1284" stroke="#000" strokeWidth="4" />
        </g>
      ))}
    </g>
    <g transform="translate(1250 840) scale(0.5102 0.33333)">
      <Grille x={73} y={76} n={6} w={115} kind={0} />
      <Grille x={209} y={178} n={4} w={81} kind={0} />
      <Grille x={312} y={252} n={2} w={46} kind={0} />
      <Grille x={390} y={306} n={6} w={116} kind={1} />
      <Grille x={527} y={407} n={4} w={82} kind={1} />
      <Grille x={629} y={483} n={2} w={48} kind={1} />
      <Grille x={721} y={552} n={6} w={116} kind={2} />
      <Grille x={858} y={652} n={4} w={81} kind={2} />
      <Grille x={960} y={727} n={2} w={48} kind={2} />
      {[[1131, 850], [1211, 909]].map(([x, y]) => (
        <g key={x} fill="#5c0e0e">
          <Red d={para(x, y, 31, 126, 0.65)} />
          <path d={para(x + 10, y + 23, 11, 22)} />
          <path d={para(x + 10, y + 68, 11, 10)} />
          <path d={para(x + 10, y + 99, 11, 22)} />
        </g>
      ))}
      <Red d="M1324 1039L1349 1054L1350 1080L1346 1095L1322 1078L1322 1048Z" />
      <Red d="M1395 1090L1418 1106L1420 1116L1416 1127L1392 1108Z" />
    </g>
    <g transform="translate(1980 1180) scale(0.574 0.33333)">
      <g strokeLinejoin="round" fill={C.red} stroke={C.red} strokeWidth="4">
        <path d="M72 138L208 244L212 262L207 275L70 164L64 154Z" />
        <path d="M229 267L364 375L367 388L361 401L232 296L221 284Z" />
        <path d="M385 397L520 502L524 530L516 540L500 530L440 482L386 436L378 420V404Z" />
      </g>
      <path d="M75 134L208 240L212 256M231 264L364 371L369 386M387 393L521 498L525 520" stroke="#000" strokeWidth="6" fill="none" />
      <Red d="M598 461L603 480V740L592 733V480Z" />
      <path d="M598 482V735" stroke="#5c0e0e" strokeWidth="6" />
      <Red d="M701 560H762V820L735 855L701 828Z" />
      <path d="M695 540L768 538V560L740 582L696 565Z" fill={C.red} />
      <path d="M735 582V850M742 580V850" stroke="#520808" strokeWidth="1" />
      <path d="M701 830L735 856L763 822" stroke="#000" strokeWidth="3" fill="none" />
      <path d="M728 500L766 533L735 573L698 540Z" fill={C.red} stroke="#000" strokeWidth="8" />
      <path d="M728 508L758 534L735 566L706 539Z" fill="none" stroke={C.red} strokeWidth="5" />
      <path d="M730 514L752 536L733 558L710 537Z" fill="#a3a3a5" />
      <Red d="M798 615H858V902L832 935L798 908Z" />
      {Array.from({ length: 9 }, (_, i) => (
        <g key={i}>
          <path d={`M796 ${650 + i * 30}L829 ${680 + i * 30}L860 ${642 + i * 30}`} stroke="#5c0505" strokeWidth="1.6" fill="none" strokeDasharray="4 2" />
          <path d={`M794 ${642 + i * 32}h3v5h-3zM859 ${642 + i * 32}h3v5h-3z`} fill="#fff" />
        </g>
      ))}
      <path d="M825 587L856 610L828 638L800 614Z" fill={C.red} stroke="#000" strokeWidth="6" />
      <path d="M796 616L828 640L860 612V622L828 654L796 628Z" fill={C.red} />
      <path d="M828 600L841 613L828 630L814 616Z" fill="#a3a3a5" />
      <Red d="M910 840L930 837L942 850L952 880L948 887L934 889L920 872L907 852Z" />
      <path d="M926 838L938 848L950 876" stroke="#000" strokeWidth="5" fill="none" />
      <Red d="M962 886L982 882L996 900L1005 925L1000 932L986 934L970 912Z" />
      <Red d="M1012 912L1064 946V985L1060 996L1011 958Z" />
      <path d="M1014 909L1062 943L1065 985" stroke="#000" strokeWidth="5" fill="none" />
      <Red d={para(1162, 1006, 31, 68, 0.62)} />
      <Hole d={para(1171, 1032, 5, 12)} />
      <Hole d={para(1181, 1034, 4, 14)} />
      <Hole d={para(1171, 1054, 5, 8)} />
      <Hole d={para(1181, 1056, 4, 14)} />
      <Red d="M1232 1122L1288 1104L1341 1212L1339 1218L1233 1130Z" />
      <Hole d="M1255 1127L1268 1122L1274 1146Z" />
      <Hole d="M1280 1120H1287L1300 1148L1291 1168L1282 1156Z" />
      <Hole d="M1305 1158L1318 1182L1302 1176Z" />
      <Red d="M1382 1246L1436 1227L1490 1334L1488 1342L1383 1254Z" />
      <Hole d="M1402 1252L1414 1247L1422 1270Z" />
      <Hole d="M1440 1248L1446 1260L1440 1272Z" />
      <Hole d="M1450 1270L1457 1286L1446 1283Z" />
      <Hole d="M1454 1294L1465 1297L1472 1308Z" />
      <path d="M1420 1246L1432 1272M1428 1244L1434 1268" stroke="#fff" strokeWidth="1.8" />
      <path d="M289 957L300 940" stroke={C.red} strokeWidth="2.5" />
    </g>
    <g stroke="#666" strokeWidth="1.4" fill="none">
      <path d="M172.500 1611V1669L218 1632M172.500 1669L232 1697" />
    </g>
    <g fill="#5f5f5f" fontSize="35" fontFamily="Open Sans, sans-serif">
      <text x="178" y="1612">z</text>
      <text x="224" y="1630">y</text>
      <text x="237" y="1699">x</text>
    </g>
  </svg>
);

/* ---------- layers panel ---------- */
const Layers = styled.aside`
  width: 500px;
  margin-left: 6px;
  flex: none;
  display: flex;
  flex-direction: column;
`;
const LayersHead = styled.div`
  height: 49px;
  flex: none;
  background: ${C.panel};
  border-radius: 12px 12px 0 0;
  border-bottom: 2px solid ${C.frame};
  display: flex;
  justify-content: space-between;
  padding: 5px 10px 0 11px;
  color: ${C.muted};
`;
const GearPad = styled.div`
  padding-top: 4px;
`;
const LayersBody = styled.div`
  flex: 1;
  display: flex;
`;
const LayersMain = styled.div`
  width: 450px;
  background: ${C.panel};
  display: flex;
  flex-direction: column;
  padding-right: 10px;
`;
const LayerTools = styled.div`
  display: grid;
  grid-template-columns: repeat(8, 55px);
  grid-auto-rows: 55px;
  padding-top: 15px;
  height: 139px;
  flex: none;
  & > div {
    display: flex;
    align-items: center;
    justify-content: center;
    padding-right: 2px;
  }
`;
const Search = styled.div`
  height: 55px;
  flex: none;
  border: 1.5px solid ${C.edge};
  border-radius: 28px;
  background: #fff;
  display: flex;
  align-items: center;
  gap: 7px;
  padding: 0 0 0 10px;
  color: ${C.muted};
`;
const Table = styled.div`
  margin-top: 12px;
  flex: 1;
  background: #fff;
  border-top: 2px solid ${C.line};
  display: flex;
  flex-direction: column;
  overflow: hidden;
`;
const THead = styled.div`
  height: 58px;
  flex: none;
  display: grid;
  grid-template-columns: 200px repeat(4, 50px) 1fr;
  border-bottom: 1.5px solid ${C.line};
`;
const Th = styled.div`
  border-right: 2px solid ${C.line};
  padding: 9px 0 0 11px;
  overflow: hidden;
  white-space: nowrap;
  &:last-child {
    border: 0;
    padding-left: 11px;
  }
`;
const TRow = styled.div`
  height: 48px;
  flex: none;
  display: grid;
  grid-template-columns: 197px 53px 49px 50px 50px 1fr;
  align-items: center;
  background: repeating-linear-gradient(90deg, ${C.line} 0 3px, transparent 3px 5px) 0 100% / 438px 2px no-repeat;
  & > div {
    display: flex;
    justify-content: center;
  }
`;
const Name = styled.span<{ $indent: number; $bold?: boolean }>`
  padding-left: ${(p) => 13 + p.$indent * 40}px;
  display: flex;
  align-items: center;
  gap: 12px;
  height: 46px;
  overflow: hidden;
  white-space: nowrap;
  font-weight: ${(p) => (p.$bold ? 700 : 400)};
`;
const Arrow = styled.span`
  width: 16px;
  flex: none;
  padding-bottom: 4px;
`;
const Swatch = styled.span<{ $c: string; $w?: number; $h?: number }>`
  width: ${(p) => p.$w || 38}px;
  height: ${(p) => p.$h || 38}px;
  background: ${(p) => p.$c};
  border: 2.5px solid #000;
  flex: none;
`;
const Ring = styled.span`
  width: 32px;
  height: 32px;
  border: 2px solid #808080;
  border-radius: 50%;
  margin-left: 4px;
`;
const Thumb = styled.div`
  width: 115px;
  height: 20px;
  border-radius: 10px;
  background: #c4c4c4;
  margin: auto 0 14px 17px;
`;
const LayersTabs = styled.div`
  width: 50px;
  display: flex;
  flex-direction: column;
  align-items: center;
`;
const PanelTabActive = styled.div`
  width: 50px;
  height: 90px;
  background: ${C.panel};
  border-radius: 0 0 12px 0;
  display: flex;
  justify-content: center;
  padding-top: 30px;
`;
const PanelTab = styled.div`
  width: 50px;
  height: 90px;
  display: flex;
  align-items: center;
  justify-content: center;
`;

const LAYERS: [string, number, string, number?, boolean?][] = [
  ['Default', 0, '#000', 96], ['Layer 01', 0, '#c80000', 109], ['Layer 02', 0, '#7f28cc', 109], ['Layer 03', 0, '#0000ff', 109],
  ['Layer 04', 0, '#008000', 109], ['Layer 05', 0, '#fff', 109], ['pipeline', 0, C.red, 117], ['porches.New', 0, '#8b0000', 169],
  ['Make2D', 0, '#000', 111, true], ['Visible', 1, '#000', 87, true], ['Scene', 2, '#000', 80], ['Curves', 2, '#000', 90],
  ['Viewport', 1, '#000', 122], ['GH_Preview', 0, '#800000', 158], ['By Parent', 0, '#000', 125],
];
const LayerBulb = () => (
  <svg width="22" height="31" viewBox="0 0 22 31">
    <path d="M6 27V21C6 17 1 15 1 9C1 -1.500 21 -1.500 21 9C21 15 16 17 16 21V27C16 31 6 31 6 27Z" fill="#ffd911" stroke="#333" strokeWidth="1.6" />
    <path d="M7 25H15V28H7Z" fill="#d08a14" />
  </svg>
);
const Unlocked = () => (
  <svg width="29" height="31" viewBox="0 0 29 31">
    <path d="M17 14V9C17 0 28 0 28 6V12" fill="none" stroke="#222" strokeWidth="2.6" />
    <rect x="1" y="14" width="21" height="16" rx="1" fill="url(#lockg)" stroke="#222" strokeWidth="1.6" />
  </svg>
);
const grey = { fill: '#d9dadd', stroke: '#a2a3a5', strokeWidth: 2.2, strokeLinejoin: 'round' as const };
const LAYER_ICONS: React.ReactNode[] = [
  <svg width="34" height="34" viewBox="0 0 50 50" key="a">
    <Wedge />
    <path d="M38 20V50M24 35H54" stroke="#fff" strokeWidth="14" />
    <path d="M38 24V47M26 35.500H50" stroke="#000" strokeWidth="7" />
  </svg>,
  <svg width="36" height="36" viewBox="0 0 36 36" key="b" {...grey}>
    <path d="M1 1L19 7V15L9 20L1 14Z M18 12L35 19V29L26 35L18 28Z" />
    <path d="M4 24V31H14M11 27L15 31L11 35" fill="none" />
  </svg>,
  <svg width="34" height="34" viewBox="0 0 34 34" key="c" {...grey}>
    <path d="M4 1L17 13L30 1L33 4L21 17L33 30L30 33L17 21L4 33L1 30L13 17L1 4Z" />
  </svg>,
  <svg width="36" height="36" viewBox="0 0 36 36" key="d" {...grey}>
    <path d="M9 28A13 14 0 1 1 24 7M25 1V8H18" fill="none" />
    <path d="M9 10L35 16V27L20 35L9 26Z" />
    <path d="M9 10L20 22L35 16M20 22V35" fill="none" strokeWidth="1.2" />
  </svg>,
  <svg width="34" height="20" viewBox="0 0 34 22" key="e" {...grey}>
    <path d="M17 1L33 17V19H1V17Z" />
  </svg>,
  <svg width="34" height="20" viewBox="0 0 34 22" key="f" {...grey}>
    <path d="M17 21L33 4V2H1V4Z" />
  </svg>,
  <svg width="22" height="34" viewBox="0 0 22 34" key="g" {...grey}>
    <path d="M1 17L19 1H21V33H19Z" />
  </svg>,
  <svg width="32" height="36" viewBox="0 0 32 36" key="h">
    <path d="M1 3L13 18V34H20V18L31 3C25 0 7 0 1 3Z" fill="#4a6ad8" stroke="#102050" strokeWidth="1.8" />
    <path d="M4 4C10 6 22 6 28 4" stroke="#aabfff" strokeWidth="2" fill="none" />
    <path d="M15 18V32" stroke="#b5c8ff" strokeWidth="2" />
  </svg>,
  <svg width="30" height="36" viewBox="0 0 30 36" key="i" fill="none" stroke="#444" strokeWidth="1.6">
    <rect x="1" y="1" width="28" height="34" />
    <path d="M1 15H29M1 26H29M10 1V35M20 1V35" />
    <path d="M0 3H30" strokeWidth="6" />
  </svg>,
  <svg width="30" height="32" viewBox="0 0 30 32" key="j">
    <path d="M2 4H28M2 16H28M2 28H28" stroke="#151515" strokeWidth="5" strokeLinecap="round" />
  </svg>,
  <Icon name="help" size={37} key="k" />,
];

/* ---------- bottom bars ---------- */
const OptionBar = styled.div<{ $h: number; $top: number }>`
  height: ${(p) => p.$h}px;
  margin-top: ${(p) => p.$top}px;
  flex: none;
  display: flex;
  padding-right: 5px;
`;
const OptionRow = styled.div`
  flex: 1;
  background: ${C.panel};
  border-left: 1px solid ${C.frame};
  display: flex;
  padding: 11px 0 0 8px;
`;
const Option = styled.label<{ $w: number }>`
  width: ${(p) => p.$w}px;
  flex: none;
  display: flex;
  gap: 12px;
  height: 34px;
  line-height: 36px;
`;
const Check = styled.span`
  width: 35px;
  height: 34px;
  flex: none;
  border: 2px solid ${C.edge};
  background: #fff;
`;
const DotGap = styled.div<{ $pt: number }>`
  width: 25px;
  margin-left: 3px;
  background: ${C.panel};
  border-radius: 10px 0 0 10px;
  display: flex;
  flex-direction: column;
  gap: 8px;
  padding-top: ${(p) => p.$pt}px;
  align-items: center;
  flex: none;
`;

type Opt = [string, number, number, number, boolean?];
const OSNAPS: Opt[] = [
  ['End', 37, 86, 133], ['Near', 157, 206, 267], ['Point', 290, 340, 406], ['Mid', 428, 478, 526], ['Cen', 550, 599, 649],
  ['Int', 672, 721, 754], ['Perp', 777, 827, 885], ['Tan', 907, 956, 999], ['Quad', 1022, 1071, 1142], ['Knot', 1165, 1215, 1275],
  ['Vertex', 1297, 1345, 1428], ['Project', 1450, 1499, 1590], ['Disable', 1632, 1681, 1777],
];
const FILTERS: Opt[] = [
  ['Points', 37, 86, 166, true], ['Curves', 188, 237, 325, true], ['Surfaces', 347, 395, 504, true], ['PolySurfaces', 527, 576, 740, true],
  ['SubDs', 764, 812, 895, true], ['Meshes', 918, 967, 1067, true], ['Annotations', 1090, 1138, 1298, true], ['Lights', 1321, 1370, 1447, true],
  ['Blocks', 1470, 1519, 1601, true], ['Control Points', 1624, 1673, 1860, true], ['Point Clouds', 1882, 1931, 2098, true],
  ['Hatches', 2120, 2169, 2273, true], ['Others', 2296, 2345, 2432, true], ['Sub-objects', 2480, 2528, 2687], ['Disable', 2714, 2764, 2858],
];
const Options = ({ items }: { items: Opt[] }) => (
  <OptionRow>
    {items.map(([label, x, a, b, on], i) => (
      <Option key={label} $w={(items[i + 1]?.[1] ?? x + 200) - x}>
        <Check>
          {on && (
            <svg width="31" height="30" viewBox="3 2 31 30">
              <path d="M5 14L9 12L15 19L27 4L29 6L16 26Z" fill="#2a2b2c" stroke="#2a2b2c" />
            </svg>
          )}
        </Check>
        <Label w={b - a + 3}>{label}</Label>
      </Option>
    ))}
  </OptionRow>
);

const StatusBar = styled.footer`
  height: 50px;
  flex: none;
  margin: 0 5px 0 2px;
  background: ${C.panel};
  display: flex;
  align-items: center;
  color: ${C.status};
`;
const StatusItem = styled.div<{ $w: number; $clip?: number }>`
  width: ${(p) => p.$w}px;
  flex: none;
  display: flex;
  align-items: center;
  ${(p) => p.$clip && css`overflow: hidden; width: ${p.$clip}px; margin-right: ${p.$w - p.$clip}px;`}
`;
const Pill = styled.div<{ $w: number }>`
  width: ${(p) => p.$w}px;
  height: 47px;
  flex: none;
  border-radius: 5px;
  background: ${C.active};
  color: ${C.text};
  font-weight: 700;
  display: flex;
  align-items: center;
  justify-content: center;
`;
const Spacer = styled.div<{ $w: number }>`
  width: ${(p) => p.$w}px;
  flex: none;
`;
const PanelToggle = ({ right }: { right?: boolean }) => (
  <svg width="36" height="36" viewBox="0 0 36 36">
    <path d="M0 0H36V36H0Z" fill="#4c4f4e" />
    <path d={right ? 'M5 5H22V31H5Z' : 'M14 5H31V31H14Z'} fill={C.panel} />
  </svg>
);
const Behind = styled.div`
  height: 22px;
  flex: none;
  border-top: 2px solid #a0a1a3;
  background: linear-gradient(#c2c2c2, #ededed 7px, #d6d6d6 8px, #d4d4d4 14px, #bdbdbd 15px, #cfcfcf 20px);
  display: flex;
  flex-direction: column;
  justify-content: space-between;
`;
const Strips = styled.div`
  display: flex;
  height: 3px;
  margin-top: 1px;
`;
const Strip = styled.div<{ $w: number; $c: string }>`
  width: ${(p) => p.$w}px;
  flex: none;
  background: ${(p) => p.$c};
`;
const Taskbar = styled.div`
  height: 5px;
  display: flex;
  overflow: hidden;
  font-size: 24px;
  line-height: 16px;
  font-weight: 700;
  color: #6ba342;
`;
const TaskText = styled.div`
  width: 140px;
  flex: none;
  background: #ececec;
`;

export default function App() {
  return (
    <Window>
      <Global />
      <Defs />
      <Frame>
        <TitleBar>
          <svg width="40" height="40" viewBox="0 0 40 40">
            <path d="M0 0H40V40H0Z" fill="#000" />
            <path d="M3 1H9L12 5L18 14L14 18L17 22L24 14L29 20L36 26L37 30L33 35L28 39L25 36L20 33L14 31L8 24L10 14L3 19L1 30L0 24V14L6 9Z" fill="#fff" />
            <path d="M14 20L18 24L16 28M19 31L23 28" stroke="#000" strokeWidth="1.5" fill="none" />
            <text x="29" y="16" fontSize="18" fill="#fff">8</text>
          </svg>
          <TitleText>
            <Label w={1255}>231116_Kharkiv_export.3dm (19 MB) - Rhino.Inside 8 Evaluation (22 Days Remaining) - [Parallel]</Label>
          </TitleText>
          <WindowButtons>
            <svg width="21" height="21" viewBox="0 0 21 21"><path d="M0 10.500H21" stroke="#999" strokeWidth="2" /></svg>
            <svg width="21" height="21" viewBox="0 0 21 21"><path d="M1 1H20V20H1Z" stroke="#999" strokeWidth="2" fill="none" /></svg>
            <svg width="21" height="21" viewBox="0 0 21 21"><path d="M1 1L20 20M20 1L1 20" stroke="#999" strokeWidth="1.6" /></svg>
          </WindowButtons>
        </TitleBar>
        <MenuBar>
          {MENU.map(([t, a, b], i) => (
            <Cell key={t} $w={cellWidth(MENU, i)}>
              <Label w={b - a + 3}>{t}</Label>
            </Cell>
          ))}
        </MenuBar>
        <CommandArea>
          <Grip n={4} />
          <CommandBody>
            <History>
              <HistoryLines>
                <HistoryLine><Label w={407}>Display mode set to "Shaded".</Label></HistoryLine>
                <HistoryLine><Label w={289}>Command: _Isometric</Label></HistoryLine>
                <HistoryLine><Label w={723}>View point ( NE  NW  SE  SW  ZoomExtents=Yes ): _SW</Label></HistoryLine>
              </HistoryLines>
              <HistoryScroll>
                <svg width="20" height="16" viewBox="0 0 20 16"><path d="M1 14L10 4L19 14" stroke="#5c5c5c" strokeWidth="4" fill="none" /></svg>
                <svg width="20" height="16" viewBox="0 0 20 16"><path d="M1 2L10 12L19 2" stroke="#5c5c5c" strokeWidth="4" fill="none" /></svg>
              </HistoryScroll>
            </History>
            <Prompt>
              <Label w={154}>Command:</Label>
              <Spinner>
                <SpinButton><svg width="12" height="7" viewBox="0 0 12 7"><path d="M6 0L12 7H0Z" /></svg></SpinButton>
                <SpinButton><svg width="12" height="7" viewBox="0 0 12 7"><path d="M6 7L12 0H0Z" /></svg></SpinButton>
              </Spinner>
            </Prompt>
          </CommandBody>
        </CommandArea>
        <TabStrip>
          <GripBack $top><Dot /></GripBack>
          <ActiveTab><Label w={119}>Standard</Label></ActiveTab>
          {TABS.slice(1).map(([t, a, b], i) => (
            <ToolTab key={t} $w={cellWidth(TABS, i + 1)}>
              <Label w={b - a + 3}>{t}</Label>
            </ToolTab>
          ))}
          <GearSlot><Gear /></GearSlot>
        </TabStrip>
        <ToolBarRow>
          <GripBack>
            <Spacer $w={1} /><Dot /><Dot /><Dot />
          </GripBack>
          <ToolBar>
            {TOOLS.map((t) => (
              <ToolButton key={t}>
                <Icon name={t.replace('*', '')} />
                {t.endsWith('*') && <Fly />}
              </ToolButton>
            ))}
          </ToolBar>
        </ToolBarRow>

        <Workspace>
          <SideBar>
            <SideHead><Grip n={4} row r="10px 10px 0 0" /></SideHead>
            {SIDE.map((s, i) => (
              <SideButton key={s}>
                <Icon name={s} />
                {i > 0 && i < 17 && <Fly />}
              </SideButton>
            ))}
            <More>»</More>
          </SideBar>
          <Center>
            <Viewport>
              <Scene />
              <ViewLabel>
                <Label w={106}>Parallel</Label>
                <ViewMenu>
                  <svg width="17" height="9" viewBox="0 0 17 9"><path d="M0 0H17L8.500 9Z" fill="#222" /></svg>
                </ViewMenu>
              </ViewLabel>
            </Viewport>
            <ViewTabs>
              <ViewTabActive><Label w={95}>Parallel</Label></ViewTabActive>
              <Spacer $w={21} />
              <ViewTab $w={92}><Label w={53}>Top</Label></ViewTab>
              <ViewTab $w={111}><Label w={71}>Front</Label></ViewTab>
              <ViewTab $w={111}><Label w={70}>Right</Label></ViewTab>
              <ViewTab $w={40}>
                <svg width="22" height="36" viewBox="0 -8 22 36">
                  <path d="M8 0H14V7H21V13H14V20H8V13H1V7H8Z" fill="#fff" stroke="#a0a1a4" strokeWidth="1.6" />
                </svg>
              </ViewTab>
            </ViewTabs>
          </Center>
          <Layers>
            <LayersHead>
              <Label w={84}>Layers</Label>
              <GearPad><Gear /></GearPad>
            </LayersHead>
            <LayersBody>
              <LayersMain>
                <LayerTools>
                  {LAYER_ICONS.map((ic, i) => (
                    <div key={i}>{ic}</div>
                  ))}
                </LayerTools>
                <Search>
                  <svg width="29" height="29" viewBox="0 0 29 29" fill="none" stroke="#2a2b2c" strokeWidth="2.4">
                    <circle cx="12" cy="12" r="10.500" />
                    <path d="M19.500 19.500L28 28" strokeWidth="3" />
                  </svg>
                  <Label w={90}>Search</Label>
                </Search>
                <Table>
                  <THead>
                    <Th><Label w={70}>Layer</Label></Th>
                    <Th /><Th /><Th /><Th />
                    <Th><Label w={108}>Material</Label></Th>
                  </THead>
                  {LAYERS.map(([name, indent, color, w, open]) => {
                    const current = name === 'pipeline';
                    return (
                      <TRow key={name}>
                        <Name $indent={indent} $bold={current}>
                          <Arrow>{open && <svg width="16" height="15" viewBox="0 0 16 15"><path d="M16 0V15H0Z" fill="#2a2b2c" /></svg>}</Arrow>
                          <Label w={w}>{name}</Label>
                        </Name>
                        <div>{current && <svg width="34" height="26" viewBox="0 0 34 26"><path d="M1 14L11 23L33 2" stroke="#222" strokeWidth="3.4" fill="none" /></svg>}</div>
                        <div>{!current && <LayerBulb />}</div>
                        <div>{!current && <Unlocked />}</div>
                        <div><Swatch $c={color} /></div>
                        <div><Ring /></div>
                      </TRow>
                    );
                  })}
                  <Thumb />
                </Table>
              </LayersMain>
              <LayersTabs>
                <PanelTabActive><svg width="31" height="31" viewBox="0 0 50 50"><Wedge /></svg></PanelTabActive>
                <PanelTab><svg width="33" height="33" viewBox="0 0 50 50"><Wheel r={20} w={10} /></svg></PanelTab>
                <PanelTab>
                  <svg width="37" height="37" viewBox="0 0 37 37">
                    <path d="M1 1H36V29H1Z" fill="url(#steel)" stroke="#111" strokeWidth="3.4" />
                    <path d="M1 28H36M15 30H22L26 36H11Z" stroke="#111" strokeWidth="2" fill="#111" />
                  </svg>
                </PanelTab>
                <PanelTab>
                  <svg width="37" height="37" viewBox="0 0 37 37">
                    <path d="M1 1H36V36H1Z" fill="#fff" stroke="#111" strokeWidth="2" />
                    <path d="M2 2H35V6H2Z" fill="#6b72d8" />
                    <path d="M3 32V24C4 5 33 5 34 24V32Z" fill="url(#help)" />
                    <text x="18.500" y="31" textAnchor="middle" fontFamily="Liberation Serif, serif" fontWeight="700" fontSize="27" fill="#fff">?</text>
                  </svg>
                </PanelTab>
              </LayersTabs>
            </LayersBody>
          </Layers>
        </Workspace>

        <OptionBar $h={55} $top={5}>
          <DotGap $pt={8}><Dot /><Dot /><Dot /></DotGap>
          <Options items={OSNAPS} />
        </OptionBar>
        <OptionBar $h={70} $top={5}>
          <DotGap $pt={8}><Dot /><Dot /><Dot /><Dot /></DotGap>
          <Options items={FILTERS} />
        </OptionBar>
        <StatusBar>
          <Spacer $w={13} />
          <PanelToggle />
          <Spacer $w={50} />
          <StatusItem $w={279}><Label w={92}>CPlane</Label></StatusItem>
          <StatusItem $w={551}><Label w={358}>x 35086.88  y 22003.80  z 0</Label></StatusItem>
          <StatusItem $w={207}><Label w={148}>Millimeters</Label></StatusItem>
          <Swatch $c={C.red} $w={41} $h={40} />
          <Spacer $w={16} />
          <StatusItem $w={439}><Label w={107}>pipeline</Label></StatusItem>
          <StatusItem $w={182}><Label w={132}>Grid Snap</Label></StatusItem>
          <StatusItem $w={129}><Label w={80}>Ortho</Label></StatusItem>
          <StatusItem $w={113}><Label w={84}>Planar</Label></StatusItem>
          <Pill $w={127}><Label w={90}>Osnap</Label></Pill>
          <Spacer $w={7} />
          <Pill $w={197}><Label w={162}>SmartTrack</Label></Pill>
          <Spacer $w={36} />
          <StatusItem $w={281}><Label w={231}>Gumball (CPlane)</Label></StatusItem>
          <StatusItem $w={47}>
            <svg width="22" height="32" viewBox="0 0 22 32" fill="none" stroke="#8c8d90" strokeWidth="2">
              <path d="M5 12V7C5 -1 17 -1 17 7V12M1 12H21V31H1Z" />
            </svg>
          </StatusItem>
          <StatusItem $w={340}><Label w={277}>Auto CPlane (Object)</Label></StatusItem>
          <StatusItem $w={227}><Label w={195}>Record History</Label></StatusItem>
          <Pill $w={112}><Label w={75}>Filter</Label></Pill>
          <Spacer $w={34} />
          <StatusItem $w={248} $clip={151}><Label w={162}>Memory use</Label></StatusItem>
          <PanelToggle right />
        </StatusBar>
      </Frame>
      <Behind>
        <Strips>
          <Strip $w={1547} $c="transparent" />
          <Strip $w={513} $c="#9e9e9e" />
          <Strip $w={194} $c="transparent" />
          <Strip $w={513} $c="#bebebe" />
        </Strips>
        <Taskbar>
          <Strip $w={632} $c="#c6c6c6" />
          <Strip $w={2124} $c="#ececec" />
          <svg width="22" height="6" viewBox="0 0 22 6"><path d="M0 0H22V6H0Z" fill="#ececec" /><path d="M5 0H17L22 6H0Z" fill="#6ba342" /></svg>
          <Strip $w={14} $c="#ececec" />
          <TaskText><Label w={130}>Ready to go</Label></TaskText>
          <Strip $w={153} $c="#ececec" />
          <Strip $w={682} $c="#c6c6c6" />
        </Taskbar>
      </Behind>
    </Window>
  );
}
